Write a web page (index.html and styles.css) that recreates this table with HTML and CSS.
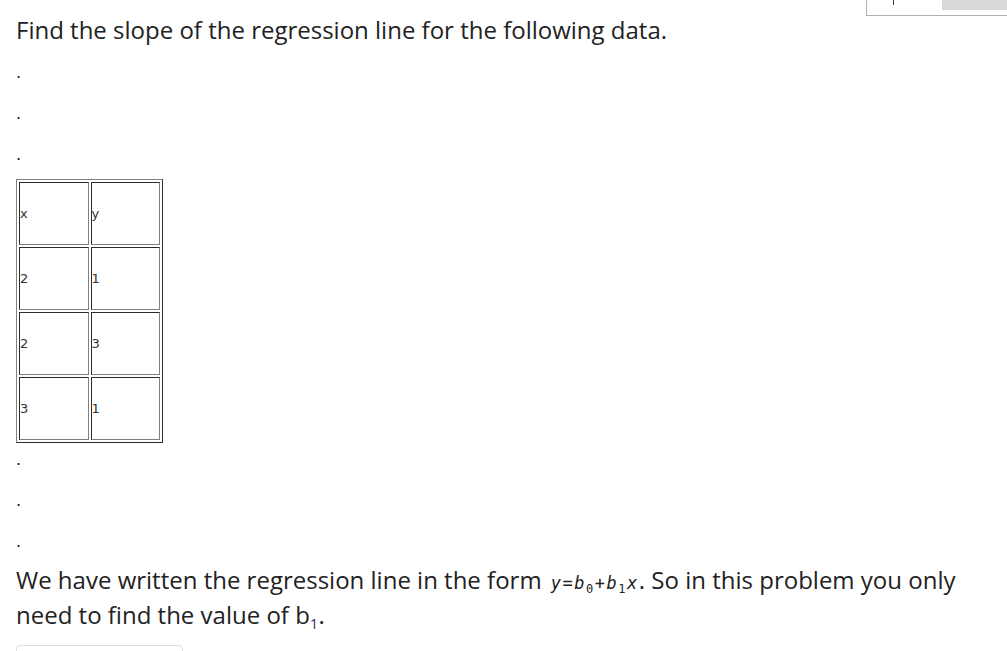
FILE: index.html
```html
<!DOCTYPE html>
<html>
<head>
<meta charset="utf-8">
<link rel="stylesheet" href="styles.css">
</head>
<body>
<div class="corner-widget">
  <span class="corner-tick"></span>
  <span class="corner-fill"></span>
</div>
<main class="page">
  <p class="question">Find the slope of the regression line for the following data.</p>
  <div class="dots">
    <div class="dot">.</div>
    <div class="dot">.</div>
    <div class="dot">.</div>
  </div>
  <table class="data">
    <tr><td>x</td><td>y</td></tr>
    <tr><td>2</td><td>1</td></tr>
    <tr><td>2</td><td>3</td></tr>
    <tr><td>3</td><td>1</td></tr>
  </table>
  <div class="dots">
    <div class="dot">.</div>
    <div class="dot">.</div>
    <div class="dot">.</div>
  </div>
  <p class="explain">We have written the regression line in the form <span class="math">y<span class="eq">=</span>b<sub>0</sub><span class="eq">+</span>b<sub>1</sub>x</span>. So in this problem you only need to find the value of b<sub class="sub-text">1</sub>.</p>
  <div class="answer"></div>
</main>
</body>
</html>
```

FILE: styles.css
```css
html, body {
  margin: 0;
  padding: 0;
  background: #ffffff;
}

body {
  font-family: "Open Sans", "Liberation Sans", sans-serif;
  color: #222222;
  overflow: hidden;
}

.page {
  padding: 0 16px;
}

.question {
  margin: 0 0 8px 0;
  padding-top: 12px;
  font-size: 24px;
  line-height: 36px;
}

.dots {
  display: flex;
  flex-direction: column;
}

.dot {
  height: 41px;
  font-family: "DejaVu Sans", sans-serif;
  font-size: 16px;
  line-height: 34px;
  color: #111;
}

.data {
  border: 1px outset #808080;
  border-spacing: 2px;
  border-collapse: separate;
  width: 147px;
  height: 264px;
  font-family: "DejaVu Sans", "Liberation Sans", sans-serif;
  font-size: 13px;
  color: #333;
}

.data td {
  border: 1px inset #808080;
  padding: 1px 1px 1px 0;
  width: 66px;
  height: 59px;
  vertical-align: middle;
  text-align: left;
}

.explain {
  margin: -4px 0 0 0;
  font-size: 24px;
  line-height: 35px;
  max-width: 950px;
}

.math {
  font-family: "DejaVu Sans Mono", monospace;
  font-style: italic;
  font-size: 17px;
  line-height: 1;
  letter-spacing: 1.5px;
  padding: 0 0 0 3px;
}

.math .eq {
  font-style: normal;
}

.math sub {
  font-size: 12px;
  font-style: normal;
  vertical-align: -4px;
  line-height: 0;
}

.sub-text {
  font-size: 15px;
  vertical-align: -5px;
  line-height: 0;
  color: #3a2a5a;
}

.answer {
  margin-top: 13px;
  width: 165px;
  height: 30px;
  border: 1px solid #dddddd;
  border-radius: 4px;
}

.corner-widget {
  position: absolute;
  top: -1px;
  left: 866px;
  width: 141px;
  height: 17px;
  border: 1px solid #b0b0b0;
  border-right: none;
  box-sizing: border-box;
  background: #fff;
}

.corner-tick {
  position: absolute;
  left: 26px;
  top: 0;
  width: 1px;
  height: 5px;
  background: #3a3a3a;
}

.corner-fill {
  position: absolute;
  left: 75px;
  top: 0;
  width: 66px;
  height: 10px;
  background: #d9d9d9;
}
```
